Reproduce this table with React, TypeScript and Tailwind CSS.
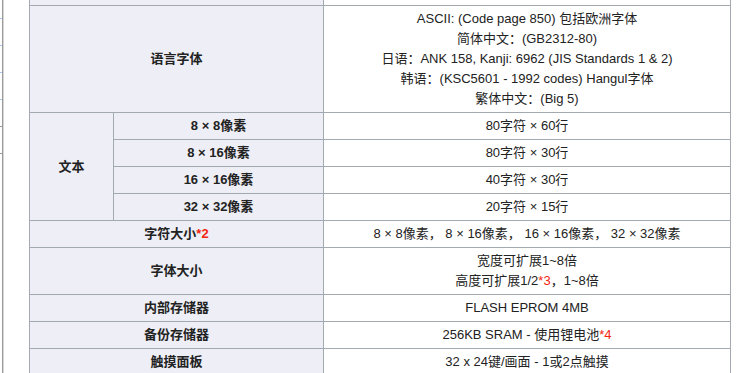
import React from 'react';

const th = 'border border-[#a2a9b1] bg-[#eeeff6] font-bold text-center px-2 py-[3px]';
const td = 'border border-[#a2a9b1] bg-white text-center px-2 py-[3px]';

const Star = ({ n }: { n: number }) => <span className="text-[#f4250f]">*{n}</span>;

const Line = ({ children }: { children: React.ReactNode }) => (
  <div className="h-5 whitespace-nowrap">{children}</div>
);

const textRows = [
  ['8 × 8像素', '80字符 × 60行'],
  ['8 × 16像素', '80字符 × 30行'],
  ['16 × 16像素', '40字符 × 30行'],
  ['32 × 32像素', '20字符 × 15行'],
];

export default function App() {
  return (
    <div
      className="w-[751px] h-[373px] overflow-hidden bg-white flex text-[13px] leading-5 text-[#222]"
      style={{ fontFamily: '"Liberation Sans", "Noto Sans CJK SC", sans-serif' }}
    >
      {/* edge of the neighbouring panel */}
      <div className="w-[29px] shrink-0 flex">
        <div className="w-[2px] flex flex-col">
          <div className="h-[18px]" />
          <div className="h-px bg-[#a8c4f0]" />
          <div className="h-[26px]" />
          <div className="h-px bg-[#a8c4f0]" />
          <div className="h-[26px]" />
          <div className="h-px bg-[#a8c4f0]" />
          <div className="h-[26px]" />
          <div className="h-px bg-[#a8c4f0]" />
          <div className="h-[26px]" />
          <div className="h-px bg-[#9a9a9a]" />
          <div className="h-[26px]" />
          <div className="h-px bg-[#9a9a9a]" />
        </div>
        <div className="w-px bg-[#9a9a9a]" />
        <div className="w-px bg-[#d6d6d6]" />
      </div>

      <table className="table-fixed border-collapse w-[702px] -mt-[22px] self-start">
        <colgroup>
          <col className="w-[84px]" />
          <col className="w-[210px]" />
          <col />
        </colgroup>
        <tbody>
          <tr>
            <th colSpan={2} className={th}>
              <Line>&nbsp;</Line>
            </th>
            <td className={td}>
              <Line>&nbsp;</Line>
            </td>
          </tr>
          <tr>
            <th colSpan={2} className={th}>语言字体</th>
            <td className={td}>
              <Line>ASCII: (Code page 850) 包括欧洲字体</Line>
              <Line>简体中文：(GB2312-80)</Line>
              <Line>日语：ANK 158, Kanji: 6962 (JIS Standards 1 &amp; 2)</Line>
              <Line>韩语：(KSC5601 - 1992 codes) Hangul字体</Line>
              <Line>繁体中文：(Big 5)</Line>
            </td>
          </tr>
          {textRows.map(([size, grid], i) => (
            <tr key={size}>
              {i === 0 && (
                <th rowSpan={4} className={th}>
                  文本
                </th>
              )}
              <th className={th}>
                <Line>{size}</Line>
              </th>
              <td className={td}>
                <Line>{grid}</Line>
              </td>
            </tr>
          ))}
          <tr>
            <th colSpan={2} className={th}>
              <Line>
                字符大小<Star n={2} />
              </Line>
            </th>
            <td className={td}>
              <Line>8 × 8像素， 8 × 16像素， 16 × 16像素， 32 × 32像素</Line>
            </td>
          </tr>
          <tr>
            <th colSpan={2} className={th}>字体大小</th>
            <td className={td}>
              <Line>宽度可扩展1~8倍</Line>
              <Line>
                高度可扩展1/2<Star n={3} />，1~8倍
              </Line>
            </td>
          </tr>
          <tr>
            <th colSpan={2} className={th}>
              <Line>内部存储器</Line>
            </th>
            <td className={td}>
              <Line>FLASH EPROM 4MB</Line>
            </td>
          </tr>
          <tr>
            <th colSpan={2} className={th}>
              <Line>备份存储器</Line>
            </th>
            <td className={td}>
              <Line>
                256KB SRAM - 使用锂电池<Star n={4} />
              </Line>
            </td>
          </tr>
          <tr>
            <th colSpan={2} className={th}>
              <Line>触摸面板</Line>
            </th>
            <td className={td}>
              <Line>32 x 24键/画面 - 1或2点触摸</Line>
            </td>
          </tr>
        </tbody>
      </table>
    </div>
  );
}
